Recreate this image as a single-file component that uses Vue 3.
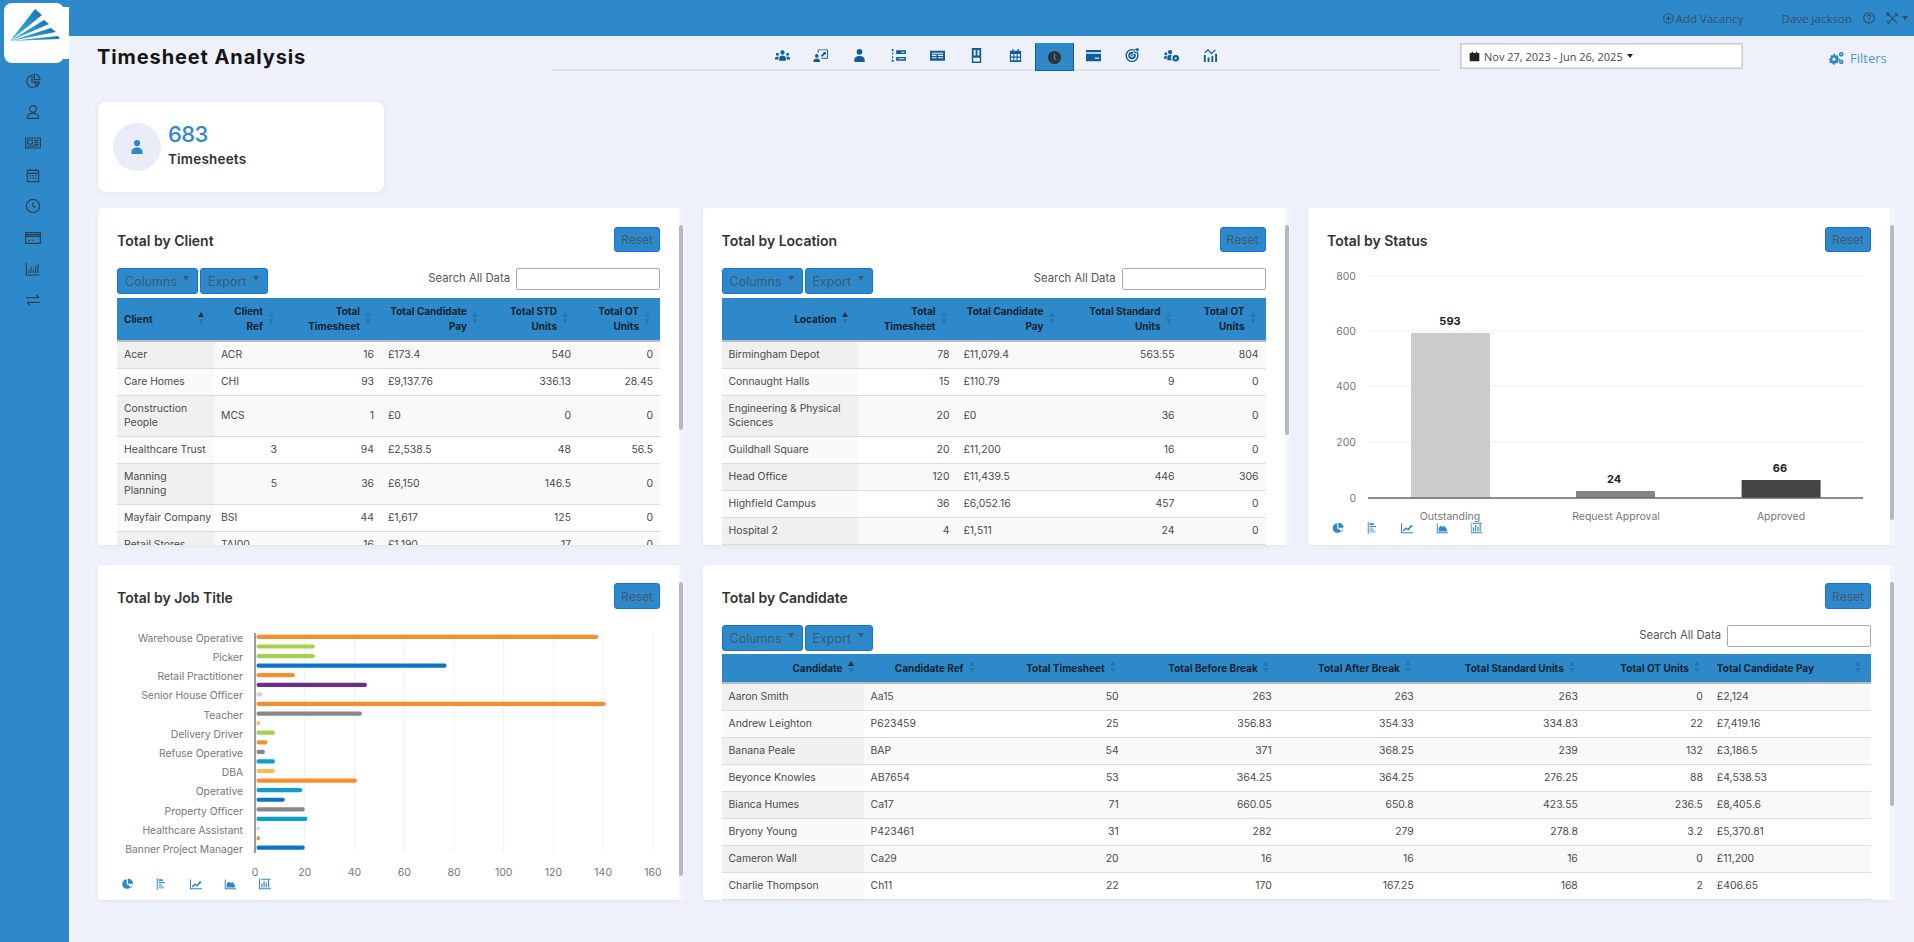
<script setup>
const icons = {
  users: 'M8 2.500a2.300 2.300 0 1 1 0 4.600A2.300 2.300 0 0 1 8 2.500zM4.400 13.500v-2.300c0-1.800 1.500-3.200 3.600-3.200s3.600 1.400 3.600 3.200v2.300zM2.600 5a1.600 1.600 0 1 1 0 3.200 1.600 1.600 0 0 1 0-3.200zM13.400 5a1.600 1.600 0 1 1 0 3.200 1.600 1.600 0 0 1 0-3.200zM0 12.200v-1.400c0-1 1.200-1.800 3.600-1.800v3.200zM16 12.200v-1.400c0-1-1.200-1.800-3.600-1.800v3.200z',
  board: 'M5 1.500h11v10H9v-1h6v-8H6V5H5zM4 6.500a1.900 1.900 0 1 1 0 3.800 1.900 1.900 0 0 1 0-3.800zM.5 15v-1.400c0-1.300 1.400-2.400 3.500-2.400s3.500 1.100 3.500 2.400V15zM8.500 8l3-3-1-.8h3.300v3.300l-1-.9-3.200 3z',
  user: 'M8 1a3.100 3.100 0 1 1 0 6.200A3.100 3.100 0 0 1 8 1zM2.500 15v-2.500C2.500 10 5 8.400 8 8.400s5.500 1.600 5.500 4.100V15z',
  list: 'M1.800 1a1 1 0 1 1 0 2.400 1 1 0 0 1 0-2.400zM1.300 4.500h1v3h-1zM1.800 12.600a1 1 0 1 1 0 2.400 1 1 0 0 1 0-2.400zM1.300 8.500h1v3h-1zM5.500 2.500H16v4H5.500zM11 4v1h3.500V4zM5.500 9.500H16v4H5.500zM8 11v1h6.500v-1z',
  news: 'M0 3h16v10.500H0zM2 5v1.200h12V5zM2 7.300v1.200h5V7.300zM8.500 7.300v1.200H14V7.300zM2 9.800V11h5V9.800zM8.500 9.800V11H14V9.800z',
  door: 'M3 0h10v16H3zM5 2v6h2V2zM9 2v6h2V2zM4.500 14.500h7v-4h-7z',
  cal: 'M2 3h2.500V1.200h1.500V3h4V1.200h1.500V3H14v12H2zM3.300 6.500V9h2.400V6.500zM6.800 6.500V9h2.400V6.500zM10.300 6.500V9h2.400V6.500zM3.300 10.300V13h2.400v-2.700zM6.800 10.300V13h2.400v-2.700zM10.300 10.300V13h2.400v-2.700z',
  clock: 'M8 1a7 7 0 1 0 0 14A7 7 0 0 0 8 1zM7.300 4h1.400v4.700L10 10l-1 .8-1.700-1.700z',
  card: 'M0 2h16v2.600H0zM0 6.200h16V14H0zM9.500 10v1.500h4.500V10z',
  target: 'M7.500 1a7 7 0 1 0 0 14 7 7 0 0 0 0-14zM7.500 2.500a5.500 5.500 0 1 1 0 11 5.500 5.500 0 0 1 0-11zM7.500 4a4 4 0 1 0 0 8 4 4 0 0 0 0-8zM7.500 6a2 2 0 1 1 0 4 2 2 0 0 1 0-4zM7.500 7a1 1 0 1 0 0 2 1 1 0 0 0 0-2zM11 1l3-1 1 2-7 6-.5-.5z',
  group: 'M6.500 2a2.300 2.300 0 1 1 0 4.600A2.300 2.300 0 0 1 6.500 2zM2 4.500a1.600 1.600 0 1 1 0 3.200 1.600 1.600 0 0 1 0-3.200zM0 11.500V10c0-1 1-1.800 3-1.800v3.300zM3.500 13v-2.500c0-1.700 1.200-3.200 3-3.200.7 0 1.300.2 1.800.5A3.800 3.800 0 0 0 8.500 13zM12.500 7.500a3.500 3.500 0 1 1 0 7 3.500 3.500 0 0 1 0-7zM12.500 9.800a1.200 1.200 0 1 0 0 2.400 1.200 1.200 0 0 0 0-2.400z',
  trend: 'M2 7.500h2V15H2zM6 10h2v5H6zM10 8.500h2V15h-2zM14 6h2v9h-2zM2.500 4.500L6.500 1l3.500 4 4-3.500.7.8L10 7 6.500 3 3.200 5.600z',
  gears: 'M5.500 3l1 .2.400 1.300 1 .5 1.300-.5.900.9-.6 1.300.5 1 1.300.4v1.400l-1.300.4-.5 1 .6 1.300-.9.900-1.300-.6-1 .5-.4 1.300H4l-.4-1.300-1-.5-1.300.6-.9-.9.600-1.300-.5-1L.2 9.400V8l1.300-.4.5-1-.6-1.300.9-.9 1.300.5 1-.5L4.500 3zM5.200 7a1.700 1.700 0 1 0 0 3.400 1.700 1.700 0 0 0 0-3.400zM13 1a2.500 2.500 0 1 1 0 5 2.500 2.500 0 0 1 0-5zM13 2.700a.8.8 0 1 0 0 1.600.8.8 0 0 0 0-1.600zM13 9a2.500 2.500 0 1 1 0 5 2.500 2.500 0 0 1 0-5zM13 10.700a.8.8 0 1 0 0 1.600.8.8 0 0 0 0-1.600z',
  pie: 'M7 1.500A6.500 6.500 0 1 0 14 9H7zM8.500.5V7.500H15.500A7 7 0 0 0 8.500.5zM8.800 9l4.400 4.400A6.500 6.500 0 0 0 14.500 9z',
  hbars: 'M1 0h1.300v16H1zM3.500 1.500H9v2.500H3.500zM3.500 5.300H12v1.200H3.500zM3.500 7.500h4v1.200h-4zM3.500 10H9v1.200H3.500zM3.500 12.500h8v1.200h-8z',
  line: 'M0 2h1.300v11.700H16V15H0zM2.500 11l4-4 2.500 2 3.500-4-1.500-.8H15v3.500l-1-1-4.500 5-2.700-2.200-3.500 3.300z',
  area: 'M1 2h1.300v11.700H16V15H1zM3.500 12.500V8l3-3.500L9 7l2-2 3.500 4.500v3z',
  vbars: 'M0 1h1.300v12.700H16V15H0zM3 7h1.500v5.500H3zM6 4h1.500v8.500H6zM9 6h1.500v6.500H9zM12 2.500h1.500v10H12zM2.500 1h13v1.200h-13z'
}
const navIcons = ['users','board','user','list','news','door','cal','clock','card','target','group','trend']
const chartIcons = ['pie','hbars','line','area','vbars']

const sideIcons = [
  'M10.500 3.500a9 9 0 1 0 10 10H10.500zM14 1.500v8.500h8.500A8.500 8.500 0 0 0 14 1.500zM14.500 14l4 6 3-6z',
  'M12 2.500a5 5 0 1 1 0 10 5 5 0 0 1 0-10zM3.500 21.500v-1.500c0-3.500 3-6 8.500-6s8.500 2.500 8.500 6v1.500z',
  'M1 4.500h22v15H1zM4 7.500h7v6H4zM14 8h6M14 11h6M14 14h6M4 16.500h16',
  'M3.500 5h17v17h-17zM3.500 9.500h17M8 2.500v4M16 2.500v4M7 13h2M11 13h2M15 13h2M7 17h2M11 17h2M15 17h2',
  'M12 2a10 10 0 1 0 0 20 10 10 0 0 0 0-20zM12 6.500V12l3.500 2.500',
  'M1 4h22v16H1zM1 9.500h22M1 7h22M5 15.500h3M11 15.500h2',
  'M2 3v18h20M5.500 18v-5M9 18V9M12.500 18v-5M16 18V8M19.500 18V5',
  'M2 8.500h19M17 4.500l4 4M3 15.500h19M7 19.500l-4-4'
]

const clientCols = [
  { t: 'Client', w: 97, a: 'l', on: true }, { t: 'Client\nRef', w: 70 }, { t: 'Total\nTimesheet', w: 97 },
  { t: 'Total Candidate\nPay', w: 107 }, { t: 'Total STD\nUnits', w: 90 }, { t: 'Total OT\nUnits', w: 82 }
]
const clientRows = [
  ['Acer','ACR','16','£173.4','540','0'],
  ['Care Homes','CHI','93','£9,137.76','336.13','28.45'],
  ['Construction\nPeople','MCS','1','£0','0','0'],
  ['Healthcare Trust','3','94','£2,538.5','48','56.5'],
  ['Manning\nPlanning','5','36','£6,150','146.5','0'],
  ['Mayfair Company','BSI','44','£1,617','125','0'],
  ['Retail Stores','TAI00','16','£1,190','17','0']
]
const locCols = [
  { t: 'Location', w: 136, on: true }, { t: 'Total\nTimesheet', w: 99 }, { t: 'Total Candidate\nPay', w: 108 },
  { t: 'Total Standard\nUnits', w: 117 }, { t: 'Total OT\nUnits', w: 84 }
]
const locRows = [
  ['Birmingham Depot','78','£11,079.4','563.55','804'],
  ['Connaught Halls','15','£110.79','9','0'],
  ['Engineering & Physical\nSciences','20','£0','36','0'],
  ['Guildhall Square','20','£11,200','16','0'],
  ['Head Office','120','£11,439.5','446','306'],
  ['Highfield Campus','36','£6,052.16','457','0'],
  ['Hospital 2','4','£1,511','24','0']
]
const candCols = [
  { t: 'Candidate', w: 142, on: true }, { t: 'Candidate Ref', w: 121 }, { t: 'Total Timesheet', w: 141 },
  { t: 'Total Before Break', w: 153 }, { t: 'Total After Break', w: 142 }, { t: 'Total Standard Units', w: 164 },
  { t: 'Total OT Units', w: 125 }, { t: 'Total Candidate Pay', w: 161, a: 'l' }
]
const candRows = [
  ['Aaron Smith','Aa15','50','263','263','263','0','£2,124'],
  ['Andrew Leighton','P623459','25','356.83','354.33','334.83','22','£7,419.16'],
  ['Banana Peale','BAP','54','371','368.25','239','132','£3,186.5'],
  ['Beyonce Knowles','AB7654','53','364.25','364.25','276.25','88','£4,538.53'],
  ['Bianca Humes','Ca17','71','660.05','650.8','423.55','236.5','£8,405.6'],
  ['Bryony Young','P423461','31','282','279','278.8','3.2','£5,370.81'],
  ['Cameron Wall','Ca29','20','16','16','16','0','£11,200'],
  ['Charlie Thompson','Ch11','22','170','167.25','168','2','£406.65'],
  ['\u00a0','','','','','','','']
]
const tables = { client: [clientCols, clientRows], loc: [locCols, locRows], cand: [candCols, candRows] }
const isNum = v => /^[\d.]+$/.test(v)

const panels = [
  { title: 'Total by Client', key: 'client', thumb: 205 },
  { title: 'Total by Location', key: 'loc', thumb: 210 }
]

const statusGrid = [[800,14],[600,69],[400,124],[200,180]]
const statusBars = [
  { x: 103, top: 71, w: 79, c: '#cbcbcb', v: '593', lab: 'Outstanding', cx: 142, vy: 63, vx: 142 },
  { x: 268, top: 229, w: 79, c: '#858585', v: '24', lab: 'Request Approval', cx: 308, vy: 221, vx: 306 },
  { x: 433.600, top: 218, w: 79, c: '#444444', v: '66', lab: 'Approved', cx: 473, vy: 210, vx: 472 }
]
const statusIcons = [30, 65, 99, 134, 168.600]

const jobTicks = [0,20,40,60,80,100,120,140,160]
const tickX = v => 157 + v * 2.487
const jobBars = [
  [138,'#f98d2a'],[24,'#a5cf4e'],[24,'#a5cf4e'],[77,'#0a75c6'],[16,'#f98d2a'],[45,'#6c2d8f'],[3,'#d4d4d4'],[141,'#f98d2a'],
  [43,'#888888'],[2,'#ffb84d'],[8,'#a5cf4e'],[5,'#f98d2a'],[4,'#888888'],[8,'#0a9fd0'],[8,'#ffb84d'],[41,'#f98d2a'],
  [19,'#0a9fd0'],[12,'#0a75c6'],[20,'#888888'],[21,'#0a9fd0'],[2,'#d4d4d4'],[2,'#f98d2a'],[20,'#0a75c6']
]
const jobLabels = [
  ['Warehouse Operative',19],['Picker',38],['Retail Practitioner',57],['Senior House Officer',76],['Teacher',96],
  ['Delivery Driver',115],['Refuse Operative',134],['DBA',153],['Operative',172],['Property Officer',192],
  ['Healthcare Assistant',211],['Banner Project Manager',230]
]
const jobIcons = [29.500, 64, 98, 132, 167]
</script>

<template>
  <div class="app">
    <aside class="sidebar">
      <div class="logo">
        <svg viewBox="0 0 60 60" width="60" height="60">
          <defs>
            <linearGradient id="fan" x1="0" y1="1" x2="1" y2="0">
              <stop offset="0" stop-color="#45b9e6" />
              <stop offset="1" stop-color="#1272b6" />
            </linearGradient>
          </defs>
          <path fill="url(#fan)" d="M6 38L31 6l7 6z" />
          <path fill="url(#fan)" d="M6 38L40 17l5 4z" />
          <path fill="url(#fan)" d="M6 38L47 25l5 4z" />
          <path fill="url(#fan)" d="M6 38L54 33l2 3z" />
        </svg>
      </div>
      <nav class="side-nav">
        <a v-for="(d, i) in sideIcons" :key="i" class="side-item">
          <svg viewBox="0 0 24 24" width="16" height="16"><path :d="d" /></svg>
        </a>
      </nav>
    </aside>

    <div class="main">
      <header class="topbar">
        <span class="add">
          <svg viewBox="0 0 16 16" width="11" height="11"><circle cx="8" cy="8" r="7" /><path d="M8 4v8M4 8h8" /></svg>
          Add Vacancy
        </span>
        <span class="who">Dave Jackson</span>
        <svg class="help" viewBox="0 0 16 16" width="12" height="12"><circle cx="8" cy="8" r="7" /><path d="M5.800 6.200a2.200 2.200 0 1 1 3.400 1.800C8.400 8.500 8 9 8 10M8 11.500v1.500" /></svg>
        <svg class="tools" viewBox="0 0 16 16" width="13" height="13"><path d="M2 2l12 12M14 2L2 14M11 1l4 4M1 11l4 4M1 1l3 1 0 2-2 0z" /></svg>
        <span class="caret-top"></span>
      </header>

      <div class="content">
        <div class="subhead">
          <h1 class="title">Timesheet Analysis</h1>
          <div class="tabs">
            <span v-for="n in navIcons" :key="n" class="tab" :class="{ active: n === 'clock' }">
              <svg viewBox="0 0 16 16" width="15" height="15"><path :d="icons[n]" fill-rule="evenodd" /></svg>
            </span>
          </div>
          <div class="date">
            <svg viewBox="0 0 16 16" width="11" height="13"><path d="M1 3h3V1h2v2h4V1h2v2h3v12H1z" /></svg>
            <span>Nov 27, 2023 - Jun 26, 2025</span>
            <i class="caret-date"></i>
          </div>
          <div class="filters">
            <svg viewBox="0 0 16 16" width="15" height="15"><path :d="icons.gears" fill-rule="evenodd" /></svg>
            <span>Filters</span>
          </div>
        </div>

        <div class="stat">
          <div class="stat-circle">
            <svg viewBox="0 0 16 16" width="16" height="16"><path :d="icons.user" /></svg>
          </div>
          <div class="stat-text">
            <div class="stat-num">683</div>
            <div class="stat-lab">Timesheets</div>
          </div>
        </div>

        <div class="grid">
          <section v-for="p in panels" :key="p.key" class="panel">
            <div class="card">
              <div class="card-head">
                <h2>{{ p.title }}</h2>
                <button class="btn reset">Reset</button>
              </div>
              <div class="toolbar">
                <div class="btns">
                  <button class="btn drop cols">Columns<i></i></button>
                  <button class="btn drop exp">Export<i></i></button>
                </div>
                <label class="search">Search All Data<input type="text" /></label>
              </div>
              <table class="tbl">
                <colgroup><col v-for="c in tables[p.key][0]" :key="c.t" :style="{ width: c.w + 'px' }" /></colgroup>
                <thead>
                  <tr>
                    <th v-for="c in tables[p.key][0]" :key="c.t" :class="{ left: c.a === 'l' }">{{ c.t }}<span class="sort" :class="{ on: c.on }"></span></th>
                  </tr>
                </thead>
                <tbody>
                  <tr v-for="(r, i) in tables[p.key][1]" :key="i">
                    <td v-for="(v, j) in r" :key="j" :class="{ num: isNum(v) }">{{ v }}</td>
                  </tr>
                </tbody>
              </table>
            </div>
            <div class="track"><div class="thumb" :style="{ height: p.thumb + 'px' }"></div></div>
          </section>

          <section class="panel">
            <div class="card">
              <div class="card-head">
                <h2>Total by Status</h2>
                <button class="btn reset">Reset</button>
              </div>
              <svg class="chart" width="582" height="283" viewBox="0 0 582 283">
                <g v-for="g in statusGrid" :key="g[0]">
                  <line x1="60" x2="555" :y1="g[1]" :y2="g[1]" class="grid-line" />
                  <text x="48" :y="g[1] + 4" text-anchor="end" class="axis">{{ g[0] }}</text>
                </g>
                <text x="48" y="240" text-anchor="end" class="axis">0</text>
                <g v-for="b in statusBars" :key="b.lab">
                  <rect :x="b.x" :y="b.top" :width="b.w" :height="236 - b.top" :fill="b.c" rx="1" />
                  <text :x="b.vx" :y="b.vy" text-anchor="middle" class="val">{{ b.v }}</text>
                  <text :x="b.cx" y="258" text-anchor="middle" class="axis">{{ b.lab }}</text>
                </g>
                <line x1="60" x2="555" y1="236" y2="236" class="base" />
                <svg v-for="(x, i) in statusIcons" :key="i" :x="x - 6" y="260" width="12" height="12" viewBox="0 0 16 16">
                  <path :d="icons[chartIcons[i]]" class="ic" fill-rule="evenodd" />
                </svg>
              </svg>
            </div>
            <div class="track"><div class="thumb" :style="{ height: '295px' }"></div></div>
          </section>

          <section class="panel">
            <div class="card second">
              <div class="card-head">
                <h2>Total by Job Title</h2>
                <button class="btn reset">Reset</button>
              </div>
              <svg class="chart" width="581" height="281" viewBox="0 0 581 281">
                <line v-for="t in jobTicks.slice(1)" :key="t" :x1="tickX(t)" :x2="tickX(t)" y1="14" y2="234" class="grid-line" />
                <line x1="157" x2="157" y1="14" y2="234" class="job-axis" />
                <rect v-for="(b, i) in jobBars" :key="i" x="158.500" :y="15.800 + i * 9.580" :width="b[0] * 2.487 - 1.500" height="4.200" rx="2" :fill="b[1]" />
                <text v-for="l in jobLabels" :key="l[0]" x="145" :y="l[1] + 4" text-anchor="end" class="axis job">{{ l[0] }}</text>
                <text v-for="t in jobTicks" :key="t" :x="tickX(t)" y="257" text-anchor="middle" class="axis">{{ t }}</text>
                <svg v-for="(x, i) in jobIcons" :key="i" :x="x - 6" y="259" width="12" height="12" viewBox="0 0 16 16">
                  <path :d="icons[chartIcons[i]]" class="ic" fill-rule="evenodd" />
                </svg>
              </svg>
            </div>
            <div class="track"><div class="thumb" :style="{ height: '294px' }"></div></div>
          </section>

          <section class="panel wide">
            <div class="card second">
              <div class="card-head">
                <h2>Total by Candidate</h2>
                <button class="btn reset">Reset</button>
              </div>
              <div class="toolbar">
                <div class="btns">
                  <button class="btn drop cols">Columns<i></i></button>
                  <button class="btn drop exp">Export<i></i></button>
                </div>
                <label class="search">Search All Data<input type="text" /></label>
              </div>
              <table class="tbl single">
                <colgroup><col v-for="c in candCols" :key="c.t" :style="{ width: c.w + 'px' }" /></colgroup>
                <thead>
                  <tr>
                    <th v-for="c in candCols" :key="c.t" :class="{ left: c.a === 'l' }">{{ c.t }}<span class="sort" :class="{ on: c.on }"></span></th>
                  </tr>
                </thead>
                <tbody>
                  <tr v-for="(r, i) in candRows" :key="i">
                    <td v-for="(v, j) in r" :key="j" :class="{ num: isNum(v) }">{{ v }}</td>
                  </tr>
                </tbody>
              </table>
            </div>
            <div class="track"><div class="thumb" :style="{ height: '224px' }"></div></div>
          </section>
        </div>
      </div>
    </div>
  </div>
</template>

<style>
html, body { margin: 0; background: #eef1f9; overflow: hidden; }
</style>

<style scoped>
* { box-sizing: border-box; }
.app { display: flex; min-height: 100vh; font-family: Inter, "Liberation Sans", sans-serif; color: #444; background: #eef1f9; }

.sidebar { width: 69px; flex: none; background: #2e89ca; padding-top: 3px; }
.logo { position: relative; width: 60px; height: 60px; margin-left: 4px; background: #fff; border-radius: 8px; }
.logo::after { content: ""; position: absolute; left: 56px; top: 4px; width: 9px; height: 52px; background: #fff; }
.logo svg { position: relative; z-index: 1; display: block; }
.side-nav { margin-top: 2px; }
.side-item { display: flex; height: 31.400px; align-items: center; justify-content: center; padding-right: 3px; }
.side-item svg { fill: none; stroke: #2d3e4d; stroke-width: 1.700; }

.main { flex: 1; min-width: 0; }
.topbar { height: 36px; background: #2e89ca; display: flex; align-items: center; justify-content: flex-end; font-family: "Open Sans", sans-serif; font-size: 11.500px; color: #35506a; padding-right: 6px; }
.topbar svg { fill: none; stroke: #2f4a62; stroke-width: 1.400; flex: none; }
.add { display: flex; align-items: center; gap: 2px; margin-right: 38px; }
.who { margin-right: 11px; }
.help { margin-right: 11px; }
.tools { margin-right: 3px; }
.caret-top { width: 0; height: 0; border: 3px solid transparent; border-top: 4px solid #2f4a62; border-bottom: 0; }

.content { padding-left: 28px; }
.subhead { display: flex; height: 66px; align-items: flex-start; }
.title { width: 454px; margin: 9px 0 0; font-size: 20px; line-height: 24px; font-weight: 700; color: #161616; letter-spacing: .9px; }
.tabs { width: 890px; height: 35px; border-bottom: 2px solid #dfe1e6; display: flex; justify-content: center; padding-top: 7px; }
.tab { width: 38.900px; height: 28px; display: flex; align-items: center; justify-content: center; }
.tab svg { fill: #0f5e9c; margin-top: -3px; }
.tab.active { background: #2e89ca; border: 1px solid #0f5e9c; border-top-color: #2e89ca; }
.tab.active svg { fill: #333; margin-top: 0; }
.date { margin: 7px 0 0 19px; width: 283px; height: 26px; background: #fff; border: 1px solid #ccc; box-shadow: inset 0 0 0 1px #e2e2e2; display: flex; align-items: center; gap: 4px; padding-left: 8px; font-family: "Open Sans", sans-serif; font-size: 11px; color: #4a4a4a; }
.date svg { fill: #222; }
.caret-date { width: 0; height: 0; border: 3.500px solid transparent; border-top: 4px solid #222; border-bottom: 0; }
.filters { margin: 13px 0 0 86px; display: flex; align-items: center; gap: 6px; color: #4d9ad5; font-family: "Open Sans", sans-serif; font-size: 13px; }
.filters svg { fill: #2e89ca; }

.stat { width: 286px; height: 90px; margin-left: 1px; background: #fff; border-radius: 8px; box-shadow: 0 1px 5px rgba(60, 80, 120, .08); display: flex; align-items: center; padding: 0 15px; gap: 7px; }
.stat-circle { width: 48px; height: 48px; border-radius: 50%; background: #e9edf8; display: flex; align-items: center; justify-content: center; flex: none; }
.stat-circle svg { fill: #2e89ca; }
.stat-text { margin-top: -8px; }
.stat-num { font-size: 22px; line-height: 30px; font-weight: 500; color: #2e89ca; letter-spacing: -.6px; }
.stat-lab { font-size: 13.500px; line-height: 18px; font-weight: 600; color: #2f2f2f; letter-spacing: .2px; margin-top: 1px; }

.grid { display: grid; width: 1797px; margin: 16px 0 0 1px; grid-template-columns: 586px 587px 587px; column-gap: 18.500px; row-gap: 20px; grid-template-rows: 337px 335px; }
.panel { display: flex; min-width: 0; }
.panel.wide { grid-column: span 2; }
.card { flex: 1; min-width: 0; background: #fff; border-radius: 4px 0 0 4px; overflow: hidden; box-shadow: 0 1px 4px rgba(60, 80, 120, .07); }
.card-head { display: flex; align-items: center; justify-content: space-between; height: 25px; margin: 19px 19px 16px; }
.card.second .card-head { margin-top: 18px; height: 26px; }
.card h2 { margin: 0; padding-top: 2px; font-size: 14px; font-weight: 600; color: #333; }
.track { width: 5px; flex: none; background: #f3f5fb; padding-top: 17px; }
.thumb { width: 4px; background: #b6b8bc; border-radius: 2px; }

.btn { font: inherit; font-size: 12.500px; color: #3f5a70; background: #2e89ca; border: 1px solid #1670e0; border-radius: 3px; padding: 0; cursor: pointer; }
.reset { width: 46px; height: 100%; font-size: 12px; }
.toolbar { display: flex; justify-content: space-between; margin: 0 19px; height: 30px; }
.card.second .toolbar { height: 29px; }
.btns { display: flex; gap: 2px; }
.drop { height: 26px; display: flex; justify-content: space-between; padding: 0 8px 0 7px; align-items: center; }
.drop i { width: 0; height: 0; border: 3px solid transparent; border-top: 5px solid #3f5a70; border-bottom: 0; margin-top: -5px; }
.cols { width: 81px; }
.exp { width: 68px; }
.search { display: flex; align-items: flex-start; gap: 6px; font-size: 11.300px; line-height: 20px; color: #555; }
.search input { width: 144px; height: 22px; border: 1px solid #aaa; border-radius: 2px; background: #fff; }

.tbl { table-layout: fixed; width: calc(100% - 38px); margin: 0 19px; border-collapse: collapse; font-size: 10.400px; line-height: 14px; }
.tbl th { position: relative; background: #2e89ca; border-bottom: 2px solid #b8bcc2; text-align: right; padding: 6px 21px 6px 7px; height: 43px; font-size: 10px; font-weight: 700; color: #14242f; line-height: 15px; white-space: pre; }
.tbl.single th { height: 29px; padding-top: 1px; padding-bottom: 1px; }
.tbl th.left { text-align: left; }
.tbl td { padding: 6px 7px; border-bottom: 1px solid #dcdcdc; background: #fff; color: #4a4a4a; text-align: left; }
.tbl td.num { text-align: right; }
.tbl td:first-child { white-space: pre; background: #fafafa; }
.tbl tbody tr:nth-child(odd) td { background: #f9f9f9; }
.tbl tbody tr:nth-child(odd) td:first-child { background: #f0f0f0; }
.sort { position: absolute; right: 10px; top: 50%; width: 6px; height: 12px; margin-top: -7px; }
.sort::before, .sort::after { content: ""; position: absolute; left: 0; width: 0; height: 0; border-left: 3px solid transparent; border-right: 3px solid transparent; }
.sort::before { top: 0; border-bottom: 5px solid #2a76ae; }
.sort::after { bottom: 0; border-top: 5px solid #2a76ae; }
.sort.on::before { border-bottom-color: #1c2f3c; }

.chart { display: block; overflow: visible; margin-top: -6px; }
.chart text { font-family: Inter, "Liberation Sans", sans-serif; }
.grid-line { stroke: #f0f1f3; stroke-width: 1; }
.base { stroke: #666; stroke-width: 1.500; }
.job-axis { stroke: #9a9a9a; stroke-width: 2; }
.axis { font-size: 10.500px; fill: #777; }
.axis.job { font-size: 10.300px; }
.val { font-size: 11px; font-weight: 700; fill: #222; }
.ic { fill: #2e89ca; }
</style>
